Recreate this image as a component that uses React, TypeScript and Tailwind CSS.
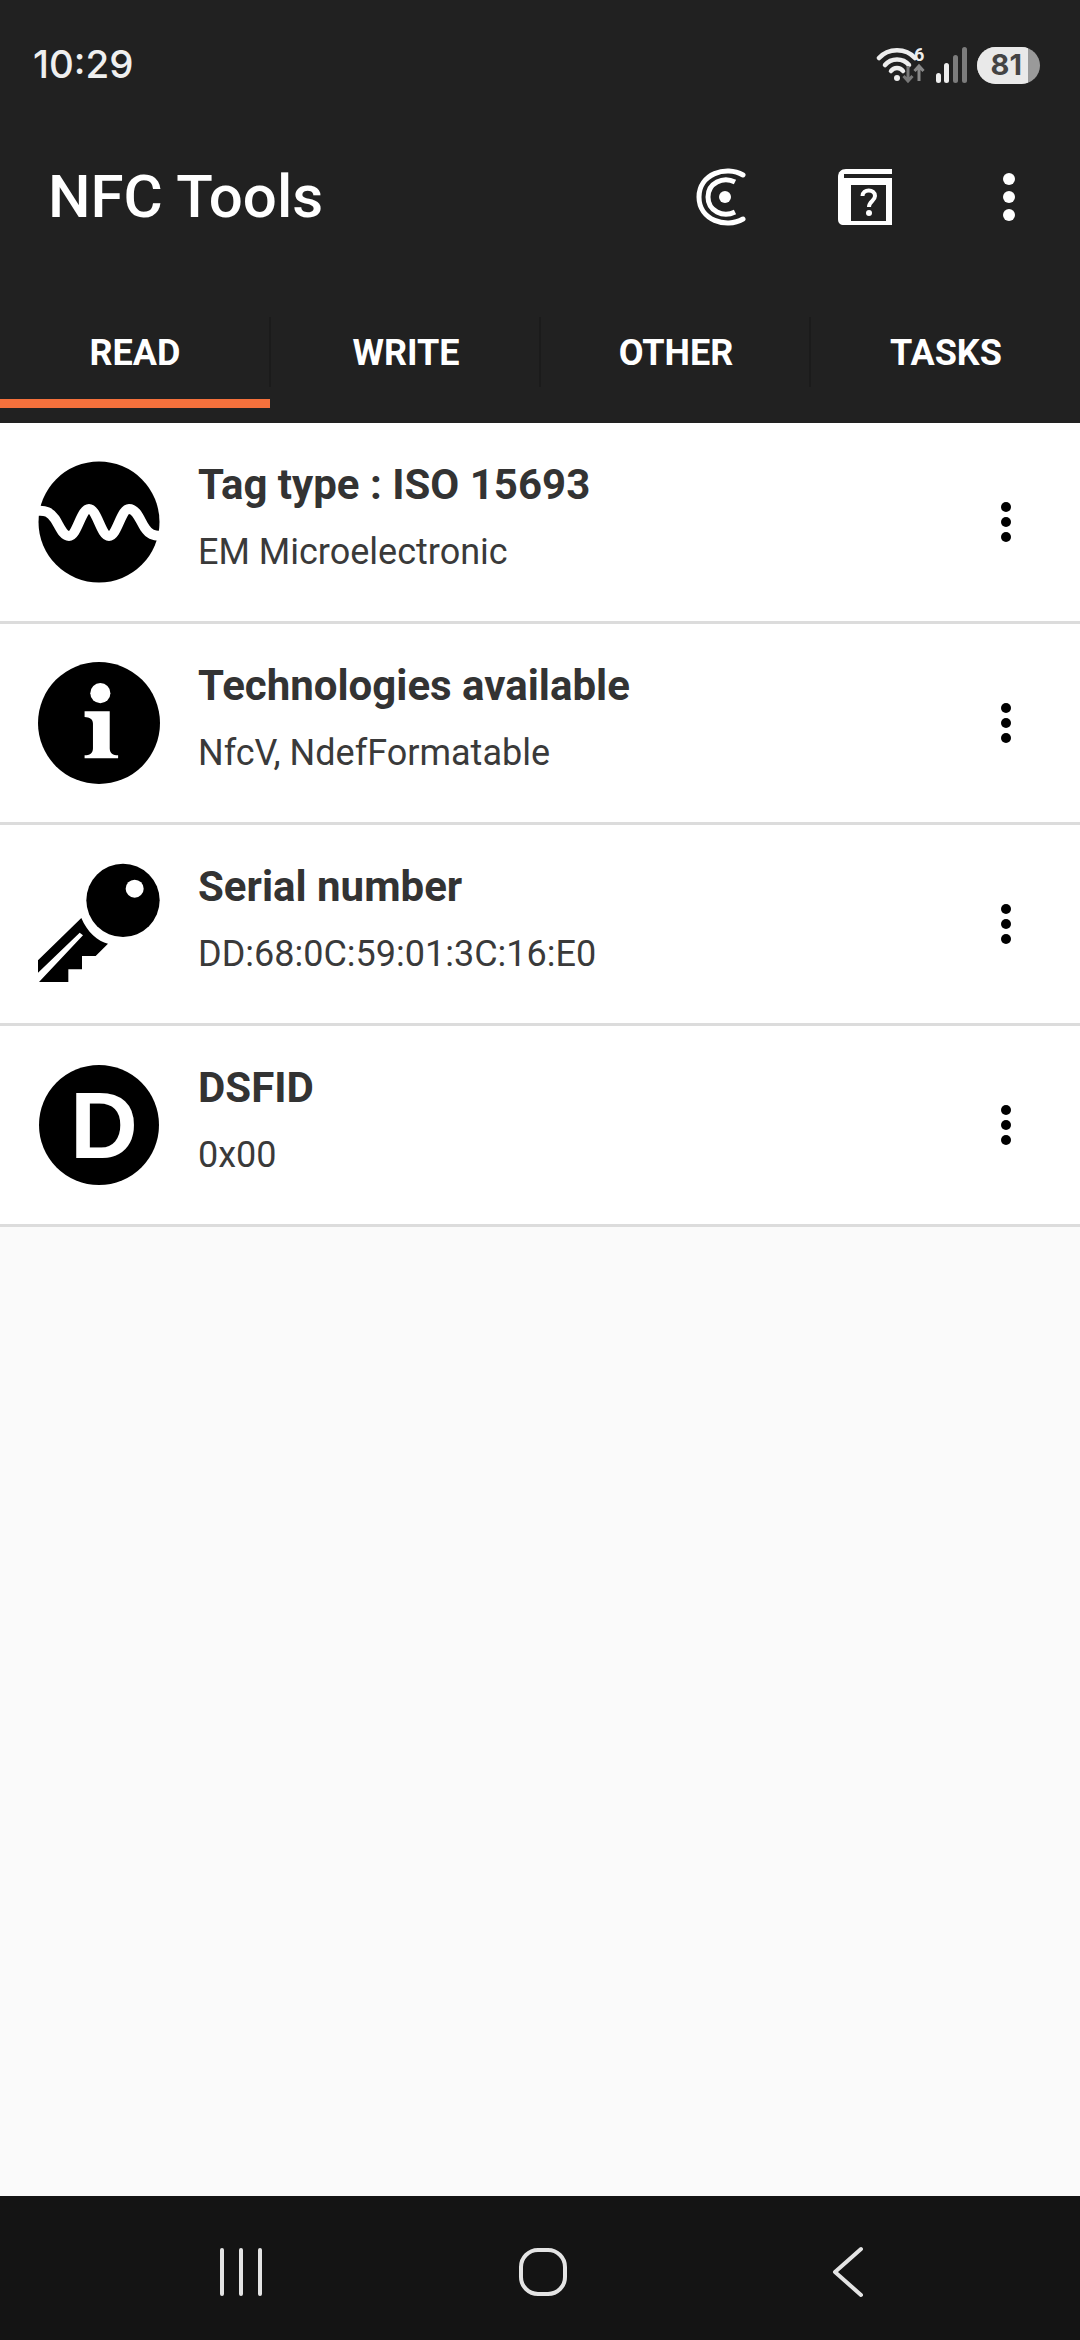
import React from "react";

const rows = [
  { title: "Tag type : ISO 15693", sub: "EM Microelectronic", icon: "wave" },
  { title: "Technologies available", sub: "NfcV, NdefFormatable", icon: "info" },
  { title: "Serial number", sub: "DD:68:0C:59:01:3C:16:E0", icon: "key" },
  { title: "DSFID", sub: "0x00", icon: "d" },
];

function RowIcon({ kind }: { kind: string }) {
  if (kind === "wave")
    return (
      <svg width="122" height="122" viewBox="0 0 122 122" className="shrink-0">
        <circle cx="61" cy="61" r="60.5" fill="#000" />
        <path
          d="M-2 50 C 8 49 12 51 17 58 C 22 66 25 75 31 75 C 39 75 43 48 51 48 C 59 48 63 75 71 75 C 79 75 83 48 91 48 C 99 48 102 60 107 67 C 111 73 115 75 124 75"
          fill="none"
          stroke="#fff"
          strokeWidth="10"
        />
      </svg>
    );
  if (kind === "info")
    return (
      <svg width="122" height="122" viewBox="56 38 364 364" className="shrink-0">
        <circle cx="238" cy="220" r="182" fill="#000" />
        <circle cx="242" cy="131" r="30" fill="#fff" />
        <path
          d="M195 185 H270 V295 C270 310 280 316 295 316 V325 H195 V316 C210 316 220 310 220 295 V222 C220 208 210 203 195 202 Z"
          fill="#fff"
        />
      </svg>
    );
  if (kind === "key")
    return (
      <svg width="122" height="122" viewBox="115 133 366 366" className="shrink-0">
        <circle cx="370" cy="245" r="110" fill="#000" />
        <circle cx="405" cy="210" r="27" fill="#fff" />
        <path d="M245 298 L115 425 V462 L240 342 L250 350 L118 490 H206 V452 H247 V412 H288 L325 375 C295 368 262 340 245 298 Z" fill="#000" />
      </svg>
    );
  return (
    <svg width="122" height="122" viewBox="0 0 122 122" className="shrink-0">
      <circle cx="61" cy="61" r="60" fill="#000" />
      <text x="66" y="94" textAnchor="middle" fontFamily="'Liberation Sans', sans-serif" fontWeight="700" fontSize="94" fill="#fff">
        D
      </text>
    </svg>
  );
}

function Dots({ r, gap, fill }: { r: number; gap: number; fill: string }) {
  const w = r * 2;
  const h = gap * 2 + r * 2;
  return (
    <svg width={w} height={h} viewBox={`0 0 ${w} ${h}`} className="shrink-0">
      <circle cx={r} cy={r} r={r} fill={fill} />
      <circle cx={r} cy={r + gap} r={r} fill={fill} />
      <circle cx={r} cy={r + gap * 2} r={r} fill={fill} />
    </svg>
  );
}

function StatusIcons() {
  return (
    <div className="flex items-center">
      <svg width="54" height="40" viewBox="0 0 54 40" className="shrink-0">
        <path d="M3 13 C 12 2.5 30 2.5 39 13" fill="none" stroke="#eee" strokeWidth="4.5" strokeLinecap="round" />
        <path d="M9 20 C 15 12.5 27 12.5 33 20" fill="none" stroke="#eee" strokeWidth="4.5" strokeLinecap="round" />
        <path d="M15 26 C 18 22 24 22 27 26" fill="none" stroke="#eee" strokeWidth="4.5" strokeLinecap="round" />
        <circle cx="21" cy="33" r="3" fill="#eee" />
        <text x="38" y="16" fontFamily="Roboto, sans-serif" fontWeight="700" fontSize="18" fill="#eee">
          6
        </text>
        <path d="M32 21 V36 M27.5 31 L32 36 L36.5 31" fill="none" stroke="#777" strokeWidth="3" />
        <path d="M43 36 V21 M38.5 26 L43 21 L47.5 26" fill="none" stroke="#888" strokeWidth="3" />
      </svg>
      <svg width="34" height="36" viewBox="0 0 34 36" className="ml-[6px] shrink-0">
        <rect x="0" y="26" width="5" height="10" rx="2.5" fill="#eee" />
        <rect x="8" y="16" width="5" height="20" rx="2.5" fill="#eee" />
        <rect x="17" y="8" width="5" height="28" rx="2.5" fill="#7c7c7c" />
        <rect x="26" y="0" width="5" height="36" rx="2.5" fill="#7c7c7c" />
      </svg>
      <div className="ml-[7px] flex h-[37px] w-[63px] items-center overflow-hidden rounded-full bg-[#9a9a9a]">
        <div className="flex h-full w-[51px] items-center justify-end bg-[#e9e9e9] pr-[6px] font-['Inter',sans-serif] text-[29px] font-bold tracking-[0px] text-[#444]">
          81
        </div>
      </div>
    </div>
  );
}

export default function App() {
  return (
    <div className="flex h-[2340px] w-[1080px] flex-col overflow-hidden bg-[#fafafa] font-['Roboto',sans-serif]">
      <header className="bg-[#212121]">
        <div className="flex h-[130px] items-center justify-between pl-[33px] pr-[40px]">
          <span className="font-['Inter',sans-serif] text-[38.5px] font-medium text-[#efefef]">10:29</span>
          <StatusIcons />
        </div>
        <div className="flex h-[134px] items-center pl-[48px] pr-[65px]">
          <h1 className="flex-1 text-[60px] font-medium leading-none text-white">NFC Tools</h1>
          <svg width="52" height="58" viewBox="0 0 52 58" className="-ml-[2px] shrink-0">
            <path d="M47 7 C 30 -3 3 6 3 29 C 3 52 30 61 47 51" fill="none" stroke="#fff" strokeWidth="5" strokeLinecap="round" />
            <path d="M39 14 C 27 8 12 15 12 29 C 12 43 27 50 39 44" fill="none" stroke="#fff" strokeWidth="5" />
            <circle cx="29" cy="29" r="6" fill="#fff" />
          </svg>
          <svg width="54" height="56" viewBox="0 0 54 56" className="ml-[90px] shrink-0">
            <path d="M8 0 H54 V56 H6 C 2 56 0 54 0 50 V8 C 0 3 3 0 8 0 Z" fill="#fff" />
            <rect x="6" y="5" width="48" height="4" fill="#212121" />
            <rect x="13" y="16" width="35" height="36" fill="#212121" />
            <path d="M24.5 27 C 24.5 19.5 37 19.5 37 27 C 37 32 31 32 31 38" fill="none" stroke="#fff" strokeWidth="4" />
            <circle cx="31" cy="44" r="3" fill="#fff" />
          </svg>
          <div className="ml-[111px]">
            <Dots r={6} gap={18} fill="#fff" />
          </div>
        </div>
        <nav className="flex pt-[51px] pb-[15px]">
          {["READ", "WRITE", "OTHER", "TASKS"].map((t, i) => (
            <div key={t} className="relative w-[270px]">
              <div className={`flex h-[93px] items-center justify-center border-b-[9px] pb-[9px] text-[36px] font-bold text-white ${i === 0 ? "border-[#f5713c]" : "border-transparent pl-[2px]"}`}>
                {t}
              </div>
              {i < 3 && <span className="absolute right-[-1px] top-[2px] h-[70px] w-[2px] bg-[#1b1b1b]" />}
            </div>
          ))}
        </nav>
      </header>

      <main className="flex-1">
        {rows.map((r) => (
          <div key={r.title} className="flex h-[201px] items-center border-b-[3px] border-[#dcdcdc] bg-white pl-[38px] pr-[70px]">
            <RowIcon kind={r.icon} />
            <div className="ml-[38px] flex-1 pb-[10px]">
              <div className="pt-[2px] text-[42px] font-bold leading-[48px] text-[#333]">{r.title}</div>
              <div className="mt-[19px] text-[36px] font-normal leading-[48px] text-[#3a3a3a]">{r.sub}</div>
            </div>
            <div className="mr-[-1px]">
              <Dots r={5} gap={15} fill="#000" />
            </div>
          </div>
        ))}
      </main>

      <footer className="flex h-[144px] shrink-0 items-center bg-[#141414] pt-[8px]">
        <svg width="46" height="50" viewBox="0 0 46 50" className="ml-[218px] shrink-0">
          <path d="M4 3 V47 M23 3 V47 M42 3 V47" stroke="#e4e4e4" strokeWidth="4" strokeLinecap="round" />
        </svg>
        <svg width="52" height="52" viewBox="0 0 52 52" className="ml-[253px] shrink-0">
          <rect x="4" y="4" width="44" height="44" rx="17" fill="none" stroke="#e4e4e4" strokeWidth="4" />
        </svg>
        <svg width="34" height="52" viewBox="0 0 34 52" className="ml-[262px] shrink-0">
          <path d="M30 3 L4 26 M4 26 L30 49" fill="none" stroke="#e4e4e4" strokeWidth="4" strokeLinecap="round" />
        </svg>
      </footer>
    </div>
  );
}
